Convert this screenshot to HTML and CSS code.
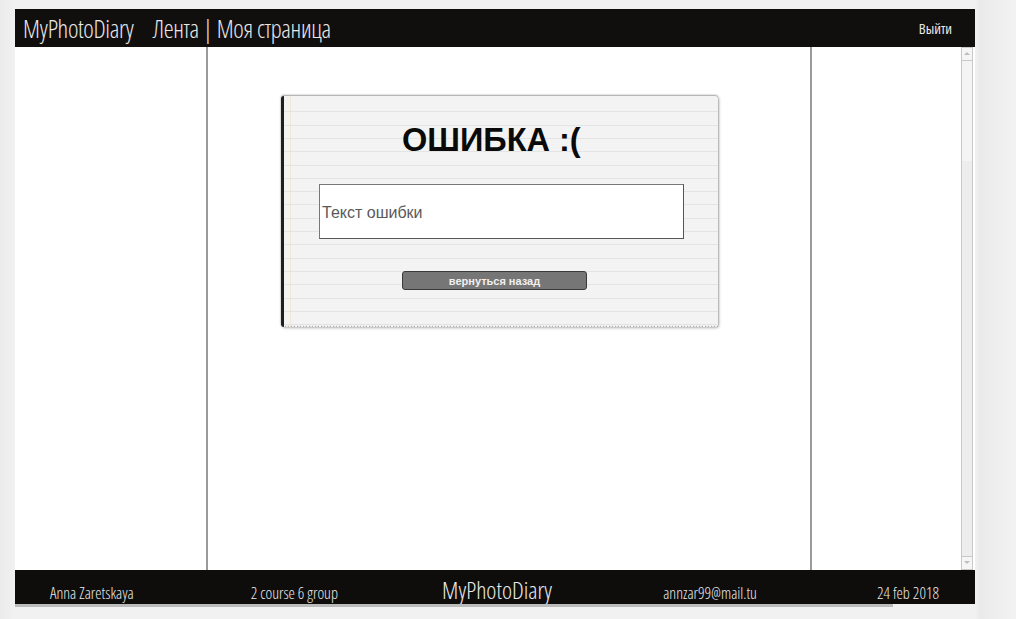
FILE: index.html
```html
<!DOCTYPE html>
<html lang="ru">
<head>
<meta charset="utf-8">
<title>MyPhotoDiary — ошибка</title>
<link rel="stylesheet" href="styles.css">
</head>
<body>
<div class="frame">
  <header class="topbar">
    <nav class="nav">
      <span class="brand">MyPhotoDiary</span>
      <span class="links">Лента | Моя страница</span>
    </nav>
    <span class="logout">Выйти</span>
  </header>
  <main class="main">
    <div class="col-left"></div>
    <div class="col-center">
      <section class="card">
        <h1 class="title">ОШИБКА :(</h1>
        <div class="error-box"><span class="error-text">Текст ошибки</span></div>
        <button class="back-btn" type="button">вернуться назад</button>
      </section>
    </div>
    <div class="col-right"></div>
    <div class="scrollbar">
      <div class="sb-btn sb-up"></div>
      <div class="sb-thumb"></div>
      <div class="sb-track"></div>
      <div class="sb-btn sb-down"></div>
    </div>
  </main>
  <footer class="footer">
    <span class="f-item f-name">Anna Zaretskaya</span>
    <span class="f-item f-group">2 course 6 group</span>
    <span class="f-brand">MyPhotoDiary</span>
    <span class="f-item f-mail">annzar99@mail.tu</span>
    <span class="f-item f-date">24 feb 2018</span>
  </footer>
  <div class="hscroll"></div>
</div>
</body>
</html>
```

FILE: styles.css
```css
html, body {
  margin: 0;
  padding: 0;
}
body {
  background: linear-gradient(to right, #ebebeb 0, #f1f1f1 15px, #f1f1f1 975px, #eaeaea 980px, #f3f3f3 1016px);
  height: 619px;
  overflow: hidden;
  padding: 9px 0 0 15px;
  box-sizing: border-box;
  font-family: "Open Sans", "DejaVu Sans Condensed", sans-serif;
}
.frame {
  width: 960px;
  display: flex;
  flex-direction: column;
}
.topbar {
  height: 38px;
  background: #110f0e;
  color: #e8e8e8;
  display: flex;
  align-items: center;
  justify-content: space-between;
  padding: 0 23px 0 8px;
  font-stretch: 75%;
  font-weight: 300;
}
.nav {
  display: flex;
  gap: 19px;
  align-items: baseline;
  font-size: 25px;
  line-height: 30px;
}
.brand {
  letter-spacing: -0.35px;
}
.links {
  letter-spacing: -0.35px;
}
.logout {
  font-size: 14.5px;
  font-weight: 400;
}
.main {
  height: 523px;
  background: #fff;
  display: flex;
}
.col-left {
  width: 191px;
  border-right: 2px solid #9a9a9a;
}
.col-center {
  width: 604px;
  border-right: 2px solid #9a9a9a;
  padding-top: 49px;
  padding-left: 73px;
  box-sizing: border-box;
}
.col-right {
  width: 149px;
}
.scrollbar {
  width: 12px;
  box-sizing: border-box;
  border: 1px solid #c9c9c9;
  display: flex;
  flex-direction: column;
  background: #ededed;
}
.sb-btn {
  height: 12px;
  background: #f5f5f5;
  position: relative;
}
.sb-up { border-bottom: 1px solid #c9c9c9; }
.sb-down { border-top: 1px solid #c9c9c9; }
.sb-up::after, .sb-down::after {
  content: "";
  position: absolute;
  left: 2px;
  top: 4px;
  border-left: 3px solid transparent;
  border-right: 3px solid transparent;
}
.sb-up::after { border-bottom: 3px solid #bdbdbd; }
.sb-down::after { border-top: 3px solid #bdbdbd; }
.sb-thumb {
  height: 100px;
  background: #f4f4f4;
}
.sb-track {
  flex: 1;
  background: #ededed;
}
.card {
  width: 437px;
  height: 231px;
  box-sizing: border-box;
  border-left: 3px solid #1e1e1e;
  border-radius: 3px;
  background-color: #f3f3f3;
  background-image:
    linear-gradient(to right, transparent 6px, rgba(240, 200, 150, 0.3) 6px, rgba(240, 200, 150, 0.3) 7px, transparent 7px),
    repeating-linear-gradient(to bottom, transparent 0, transparent 12.3px, #e4e4e4 12.3px, #e4e4e4 13.3px);
  background-position: 0 0, 0 3px;
  box-shadow: 0 -1px 2px rgba(0, 0, 0, 0.35), 1px 1px 3px rgba(0, 0, 0, 0.3);
  display: flex;
  flex-direction: column;
  align-items: flex-start;
  position: relative;
}
.card::after {
  content: "";
  position: absolute;
  left: 0;
  right: 0;
  bottom: -1px;
  height: 3px;
  background: radial-gradient(circle at 3px 0, #f3f3f3 1.5px, #9a9a9a 2px, transparent 2.5px) repeat-x;
  background-size: 6px 3px;
}
.title {
  margin: 24px 0 0 118px;
  font-family: "Liberation Sans", Arial, sans-serif;
  font-size: 32.5px;
  font-weight: bold;
  color: #0a0a0a;
  line-height: 40px;
}
.error-box {
  margin: 24px 0 0 35px;
  width: 365px;
  height: 55px;
  box-sizing: border-box;
  border: 1px solid #777;
  border-right-color: #555;
  border-bottom-color: #555;
  background: #fff;
  display: flex;
  align-items: center;
  padding: 0 0 0 2px;
}
.error-text {
  font-family: "Liberation Sans", Arial, sans-serif;
  font-size: 16px;
  color: #5a5a5a;
  padding-top: 2px;
}
.back-btn {
  margin: 32px 0 0 118px;
  width: 185px;
  height: 19px;
  padding: 0;
  border: 1px solid #3a3a3a;
  border-radius: 3px;
  background: #767676;
  color: #f0f0f0;
  font-family: "Liberation Sans", Arial, sans-serif;
  font-size: 11px;
  font-weight: bold;
}
.footer {
  height: 34px;
  background: #0e0d0c;
  color: #eaeaea;
  display: flex;
  align-items: baseline;
  padding: 0 0 0 35px;
  font-stretch: 75%;
  font-weight: 300;
  box-sizing: border-box;
}
.f-item {
  font-size: 16px;
  line-height: 40px;
}
.f-group { margin-left: 117px; }
.f-brand {
  margin-left: 104px;
  font-size: 24px;
  font-weight: 300;
  line-height: 40px;
}
.f-mail { margin-left: 111px; }
.f-date { margin-left: 120px; }
.hscroll {
  width: 878px;
  height: 3px;
  background: #bbb;
}
```
